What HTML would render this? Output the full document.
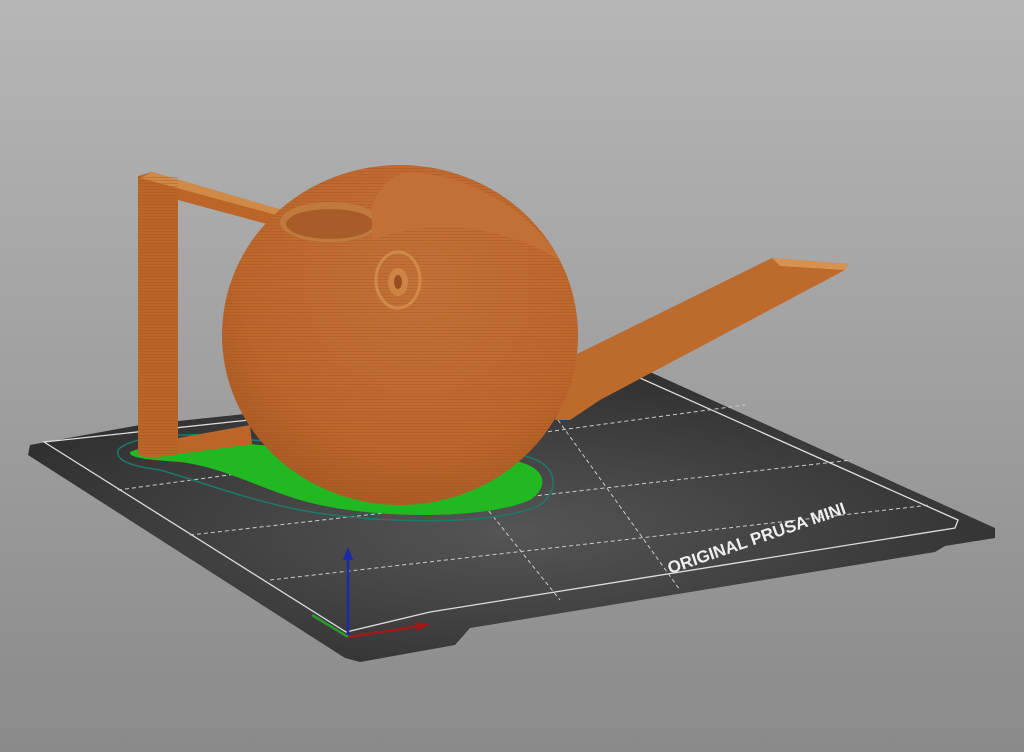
<!DOCTYPE html>
<html><head><meta charset="utf-8"><style>
html,body{margin:0;padding:0;width:1024px;height:752px;overflow:hidden}
</style></head><body>
<svg width="1024" height="752" viewBox="0 0 1024 752" xmlns="http://www.w3.org/2000/svg">
<defs>
<linearGradient id="bg" x1="0" y1="0" x2="0" y2="1">
<stop offset="0" stop-color="#b6b6b6"/><stop offset="1" stop-color="#8a8a8a"/></linearGradient>
<radialGradient id="bed" cx="0.5" cy="0.55" r="0.6">
<stop offset="0" stop-color="#555"/><stop offset="1" stop-color="#2e2e2e"/></radialGradient>
<radialGradient id="pot" cx="0.55" cy="0.35" r="0.7">
<stop offset="0" stop-color="#c4723a"/><stop offset="0.7" stop-color="#bc672c"/><stop offset="1" stop-color="#a85824"/></radialGradient>
<pattern id="lines" width="4" height="3" patternUnits="userSpaceOnUse">
<rect width="4" height="1" fill="#a0521f" opacity="0.35"/></pattern>
</defs>
<rect width="1024" height="752" fill="url(#bg)"/>
<path d="M30,445 L140,425 L650,372 L995,528 L995,538 L945,546 L935,552 L470,628 L455,645 L360,662 L345,658 L28,455 Z" fill="url(#bed)"/>
<path d="M44,442 L640,378 L958,520 L955,528 L430,612 L346,632 Z" fill="none" stroke="#ddd" stroke-width="1.3"/>
<g stroke="#ccc" stroke-width="1" stroke-dasharray="4,3" fill="none">
<path d="M118,490 L745,405"/><path d="M190,535 L852,460"/><path d="M270,580 L930,505"/>
<path d="M558,420 L680,590"/><path d="M480,500 L560,600"/>
</g>
<text x="670" y="574" font-family="Liberation Sans, sans-serif" font-weight="bold" font-size="17" fill="#eee" transform="rotate(-19 670 574)">ORIGINAL PRUSA MINI</text>
<line x1="348" y1="637" x2="348" y2="555" stroke="#1a2aa8" stroke-width="2.5"/>
<path d="M343,560 L348,547 L353,560Z" fill="#1a2aa8"/>
<line x1="348" y1="637" x2="420" y2="626" stroke="#a31818" stroke-width="2.5"/>
<path d="M415,622 L430,624 L417,631Z" fill="#a31818"/>
<line x1="348" y1="637" x2="312" y2="615" stroke="#2a9a2a" stroke-width="2.5"/>
<path d="M118,450 C130,435 200,430 250,440 L520,455 C560,462 560,490 540,505 C500,525 380,525 300,510 C240,498 190,478 160,470 C130,466 115,460 118,450Z" fill="none" stroke="#1d7a6a" stroke-width="1.5"/>
<path d="M130,452 C150,442 220,440 260,445 L520,462 C548,470 548,488 530,500 C490,518 390,520 320,505 C270,495 230,468 180,462 C150,460 128,458 130,452Z" fill="#22b822"/>
<path d="M138,176 L152,172 L282,210 L282,228 L178,200 L178,438 L250,425 L252,444 L150,458 L138,455 Z" fill="#bb6528"/>
<path d="M152,172 L282,210 L280,216 L140,178Z" fill="#d08a45"/>
<rect x="138" y="176" width="40" height="280" fill="url(#lines)"/>
<path d="M555,420 L575,355 L772,258 L848,264 L845,270 L600,400 L570,420 Z" fill="#bd6a2d"/>
<path d="M772,258 L848,264 L845,270 L780,266Z" fill="#d89250"/>
<ellipse cx="400" cy="335" rx="178" ry="170" fill="url(#pot)"/>
<ellipse cx="400" cy="335" rx="178" ry="170" fill="url(#lines)"/>
<ellipse cx="330" cy="222" rx="50" ry="20" fill="#c07a3e"/>
<ellipse cx="330" cy="224" rx="44" ry="15" fill="#a85c28"/>
<path d="M372,205 C380,185 395,173 410,172 C470,175 530,210 560,260 C510,230 440,215 372,240Z" fill="#c27035"/>
<ellipse cx="398" cy="280" rx="22" ry="28" fill="none" stroke="#cf8a4a" stroke-width="3"/>
<ellipse cx="398" cy="282" rx="10" ry="14" fill="#cc8545"/>
<ellipse cx="398" cy="282" rx="4" ry="7" fill="#9a4e1e"/>
</svg>
</body></html>
